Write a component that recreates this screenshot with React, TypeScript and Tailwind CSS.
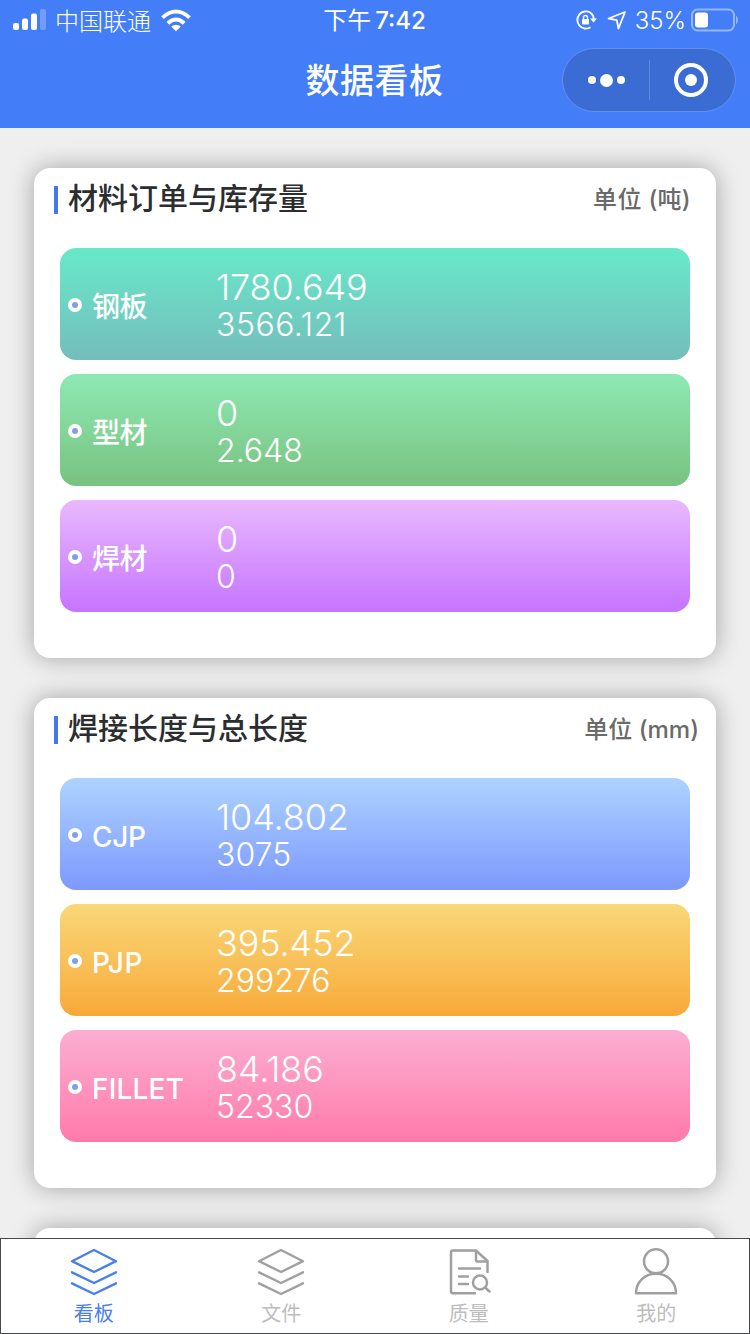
import clsx from "clsx";

interface Metric {
  label: string;
  labelClass: string;
  total: string;
  current: string;
  currentClass?: string;
  gradient: string;
}

interface Section {
  title: string;
  unit: string;
  unitClass: string;
  metrics: Metric[];
}

const sections: Section[] = [
  {
    title: "材料订单与库存量",
    unit: "单位 (吨)",
    unitClass: "mr-[25px] tracking-[0.3px]",
    metrics: [
      { label: "钢板", labelClass: "pt-1 tracking-[-0.5px]", total: "1780.649", current: "3566.121", currentClass: "tracking-[0.5px]", gradient: "from-[#66e9c9] to-[#74bdbb]" },
      { label: "型材", labelClass: "pt-1 tracking-[-0.5px]", total: "0", current: "2.648", gradient: "from-[#8ee9b4] to-[#79c280]" },
      { label: "焊材", labelClass: "pt-1 tracking-[-0.5px]", total: "0", current: "0", gradient: "from-[#e9b8fd] to-[#c673fe]" },
    ],
  },
  {
    title: "焊接长度与总长度",
    unit: "单位 (mm)",
    unitClass: "mr-[17px]",
    metrics: [
      { label: "CJP", labelClass: "pt-[3px] tracking-[-0.3px]", total: "104.802", current: "3075", gradient: "from-[#aed3fe] to-[#7e98fd]" },
      { label: "PJP", labelClass: "pt-[3px] tracking-[0.5px]", total: "395.452", current: "299276", gradient: "from-[#f8d877] to-[#f8a937]" },
      { label: "FILLET", labelClass: "pt-[3px] tracking-[0.2px]", total: "84.186", current: "52330", gradient: "from-[#fbaed2] to-[#fe7aaa]" },
    ],
  },
];

const tabs = [
  { label: "看板", icon: LayersIcon, active: true },
  { label: "文件", icon: LayersIcon, active: false },
  { label: "质量", icon: ReportIcon, active: false },
  { label: "我的", icon: UserIcon, active: false },
];

function LayersIcon() {
  return (
    <svg width="50" height="50" viewBox="0 0 50 50" fill="none" stroke="currentColor" strokeWidth="2.4" strokeLinecap="round" strokeLinejoin="round">
      <path d="M25 3 47 14.2 25 25 3 14.2Z" />
      <path d="M3 25.3 25 36l22-10.7" />
      <path d="M3 36.3 25 47l22-10.7" />
    </svg>
  );
}

function ReportIcon() {
  return (
    <svg width="50" height="50" viewBox="0 0 50 50" fill="none" stroke="currentColor" strokeWidth="2.5" strokeLinecap="round" strokeLinejoin="round">
      <path d="M31 46.2H9a2 2 0 0 1-2-2V5.5a2 2 0 0 1 2-2H32L43.5 14v11" />
      <path d="M32 4v9a1.5 1.5 0 0 0 1.5 1.5h9" />
      <path d="M15 21.5h21M15 29.5h9M15 37h9" />
      <circle cx="36" cy="35.5" r="7" />
      <path d="m41 40.5 4.500 4" />
    </svg>
  );
}

function UserIcon() {
  return (
    <svg width="50" height="50" viewBox="0 0 50 50" fill="none" stroke="currentColor" strokeWidth="2.5" strokeLinejoin="round">
      <circle cx="25" cy="14.3" r="12" />
      <path d="M5 46.3C5 35 13.5 26.8 25 26.8S45 35 45 46.3Z" />
    </svg>
  );
}

function StatusBar() {
  return (
    <div className="grid h-10 grid-cols-[1fr_auto_1fr] items-center text-2xl leading-none">
      <div className="flex items-center pl-[13px]">
        <svg width="33" height="22" viewBox="0 0 33 22" fill="currentColor">
          <rect x="0" y="14" width="6" height="7" rx="2" />
          <rect x="9" y="9.5" width="6" height="11.5" rx="2" />
          <rect x="18" y="4.5" width="6" height="16.5" rx="2" />
          <rect x="27" y="0" width="6" height="21" rx="2" opacity="0.25" />
        </svg>
        <span className="ml-[9px] pt-[3px] font-light">中国联通</span>
        <svg className="ml-[10px]" width="30" height="23" viewBox="0 0 31 23" fill="none" stroke="currentColor" strokeWidth="4">
          <path d="M1.5 8.5Q15.5-4 29.5 8.5" />
          <path d="M7 14.3Q15.5 6.5 24 14.3" />
          <path d="M15.5 22.5 10.5 17.8q5-3.6 10 0Z" fill="currentColor" stroke="none" />
        </svg>
      </div>
      <div className="flex items-center gap-1 pt-0.5 pr-px">
        <span>下午</span>
        <span className="font-medium">7:42</span>
      </div>
      <div className="flex items-center justify-end pr-[11px]">
        <svg width="22" height="20" viewBox="0 0 22 20" fill="none" stroke="currentColor" strokeWidth="1.8">
          <path d="M15.5 2.700A8.600 8.600 0 1 0 15.500 17.300M15.500 2.700A8.600 8.600 0 0 1 18.800 9" />
          <path d="m14.9 8.500 3.800 4 3.300-4Z" fill="currentColor" stroke="none" />
          <rect x="7" y="9" width="7" height="5.5" rx="0.8" fill="currentColor" stroke="none" />
          <path d="M8.5 9V7.500a2 2 0 0 1 4 0V9" strokeWidth="1.4" />
        </svg>
        <svg className="ml-[10px]" width="20" height="20" viewBox="0 0 20 20" fill="none" stroke="currentColor" strokeWidth="1.8" strokeLinejoin="round">
          <path d="M18 2 1.500 8.500l8.300 1.700L11.500 18.500Z" />
        </svg>
        <span className="ml-2 pt-0.5 font-light">35%</span>
        <svg className="ml-[5px]" width="48" height="24" viewBox="0 0 48 24">
          <rect x="1" y="1.5" width="42" height="21" rx="5.5" fill="none" stroke="#fff" strokeOpacity="0.45" strokeWidth="2" />
          <rect x="4" y="4.5" width="13" height="15" rx="3" fill="#fff" />
          <path d="M45.5 8.500q2 3.500 0 7Z" fill="#fff" stroke="#fff" opacity="0.45" />
        </svg>
      </div>
    </div>
  );
}

function TitleBar() {
  return (
    <div className="grid h-[88px] grid-cols-[1fr_auto_1fr] items-center pb-2">
      <div />
      <h1 className="mr-px pt-0.5 text-[34px] leading-none font-medium tracking-[0.5px]">数据看板</h1>
      <div className="mr-[14px] flex h-16 w-[174px] items-center justify-self-end rounded-full border border-[#6490ec] bg-[#3b6cd4]">
        <div className="flex flex-1 items-center justify-center gap-1 pl-0.5">
          <span className="size-2 rounded-full bg-white" />
          <span className="size-[13px] rounded-full bg-white" />
          <span className="size-2 rounded-full bg-white" />
        </div>
        <div className="h-10 w-px bg-[#5c88e4]" />
        <div className="flex flex-1 items-center justify-center pr-0.5">
          <div className="flex size-[34px] items-center justify-center rounded-full border-4 border-white">
            <span className="size-3 rounded-full bg-white" />
          </div>
        </div>
      </div>
    </div>
  );
}

function MetricRow({ label, labelClass, total, current, currentClass, gradient }: Metric) {
  return (
    <div className={clsx("flex h-28 items-center rounded-2xl bg-linear-to-b pt-0.5 pl-2 text-white", gradient)}>
      <span className="size-[14px] rounded-full border-4 border-white bg-[#7f9fe6]" />
      <span className={clsx("ml-[10px] w-[124px] text-[28px] leading-none font-medium", labelClass)}>{label}</span>
      <div className="pt-px font-['Inter',sans-serif] font-light">
        <div className="text-4xl leading-[38px] tracking-[-0.1px]">{total}</div>
        <div className={clsx("text-[32px] leading-[37px]", currentClass)}>{current}</div>
      </div>
    </div>
  );
}

function SectionCard({ title, unit, unitClass, metrics }: Section) {
  return (
    <section className="h-[490px] shrink-0 rounded-2xl bg-white shadow-[0_0_24px_rgba(0,0,0,0.32)]">
      <div className="flex h-20 items-start justify-between pl-5">
        <div className="flex items-center pt-[14px]">
          <span className="mt-1 h-7 w-1 bg-[#4378e6]" />
          <h2 className="ml-[10px] text-[30px] leading-8 font-medium text-[#2c2d2f]">{title}</h2>
        </div>
        <span className={clsx("pt-4 text-2xl leading-8 font-medium text-[#6a6a6a]", unitClass)}>{unit}</span>
      </div>
      <div className="flex flex-col gap-[14px] px-[26px]">
        {metrics.map((metric) => (
          <MetricRow key={metric.label} {...metric} />
        ))}
      </div>
    </section>
  );
}

export default function App() {
  return (
    <div className="flex h-[1334px] w-[750px] flex-col overflow-hidden bg-[#efeff0] font-['Inter','Noto_Sans_CJK_SC',sans-serif]">
      <header className="h-32 shrink-0 bg-[#437df8] text-white">
        <StatusBar />
        <TitleBar />
      </header>
      <main className="flex min-h-0 flex-1 flex-col gap-10 overflow-hidden px-[34px] pt-10">
        {sections.map((section) => (
          <SectionCard key={section.title} {...section} />
        ))}
        <section className="h-[490px] shrink-0 rounded-2xl bg-white shadow-[0_0_24px_rgba(0,0,0,0.32)]" />
      </main>
      <nav className="flex h-24 shrink-0 border border-[#48494b] bg-white">
        {tabs.map(({ label, icon: Icon, active }) => (
          <div key={label} className={clsx("flex w-[187.5px] shrink-0 flex-col items-center pt-2 pr-[2px]", active ? "text-[#4a80ea]" : "text-[#a0a0a0]")}>
            <Icon />
            <span className={clsx("mt-[7px] text-xl leading-5", !active && "text-[#bdbdbd]")}>{label}</span>
          </div>
        ))}
      </nav>
    </div>
  );
}
